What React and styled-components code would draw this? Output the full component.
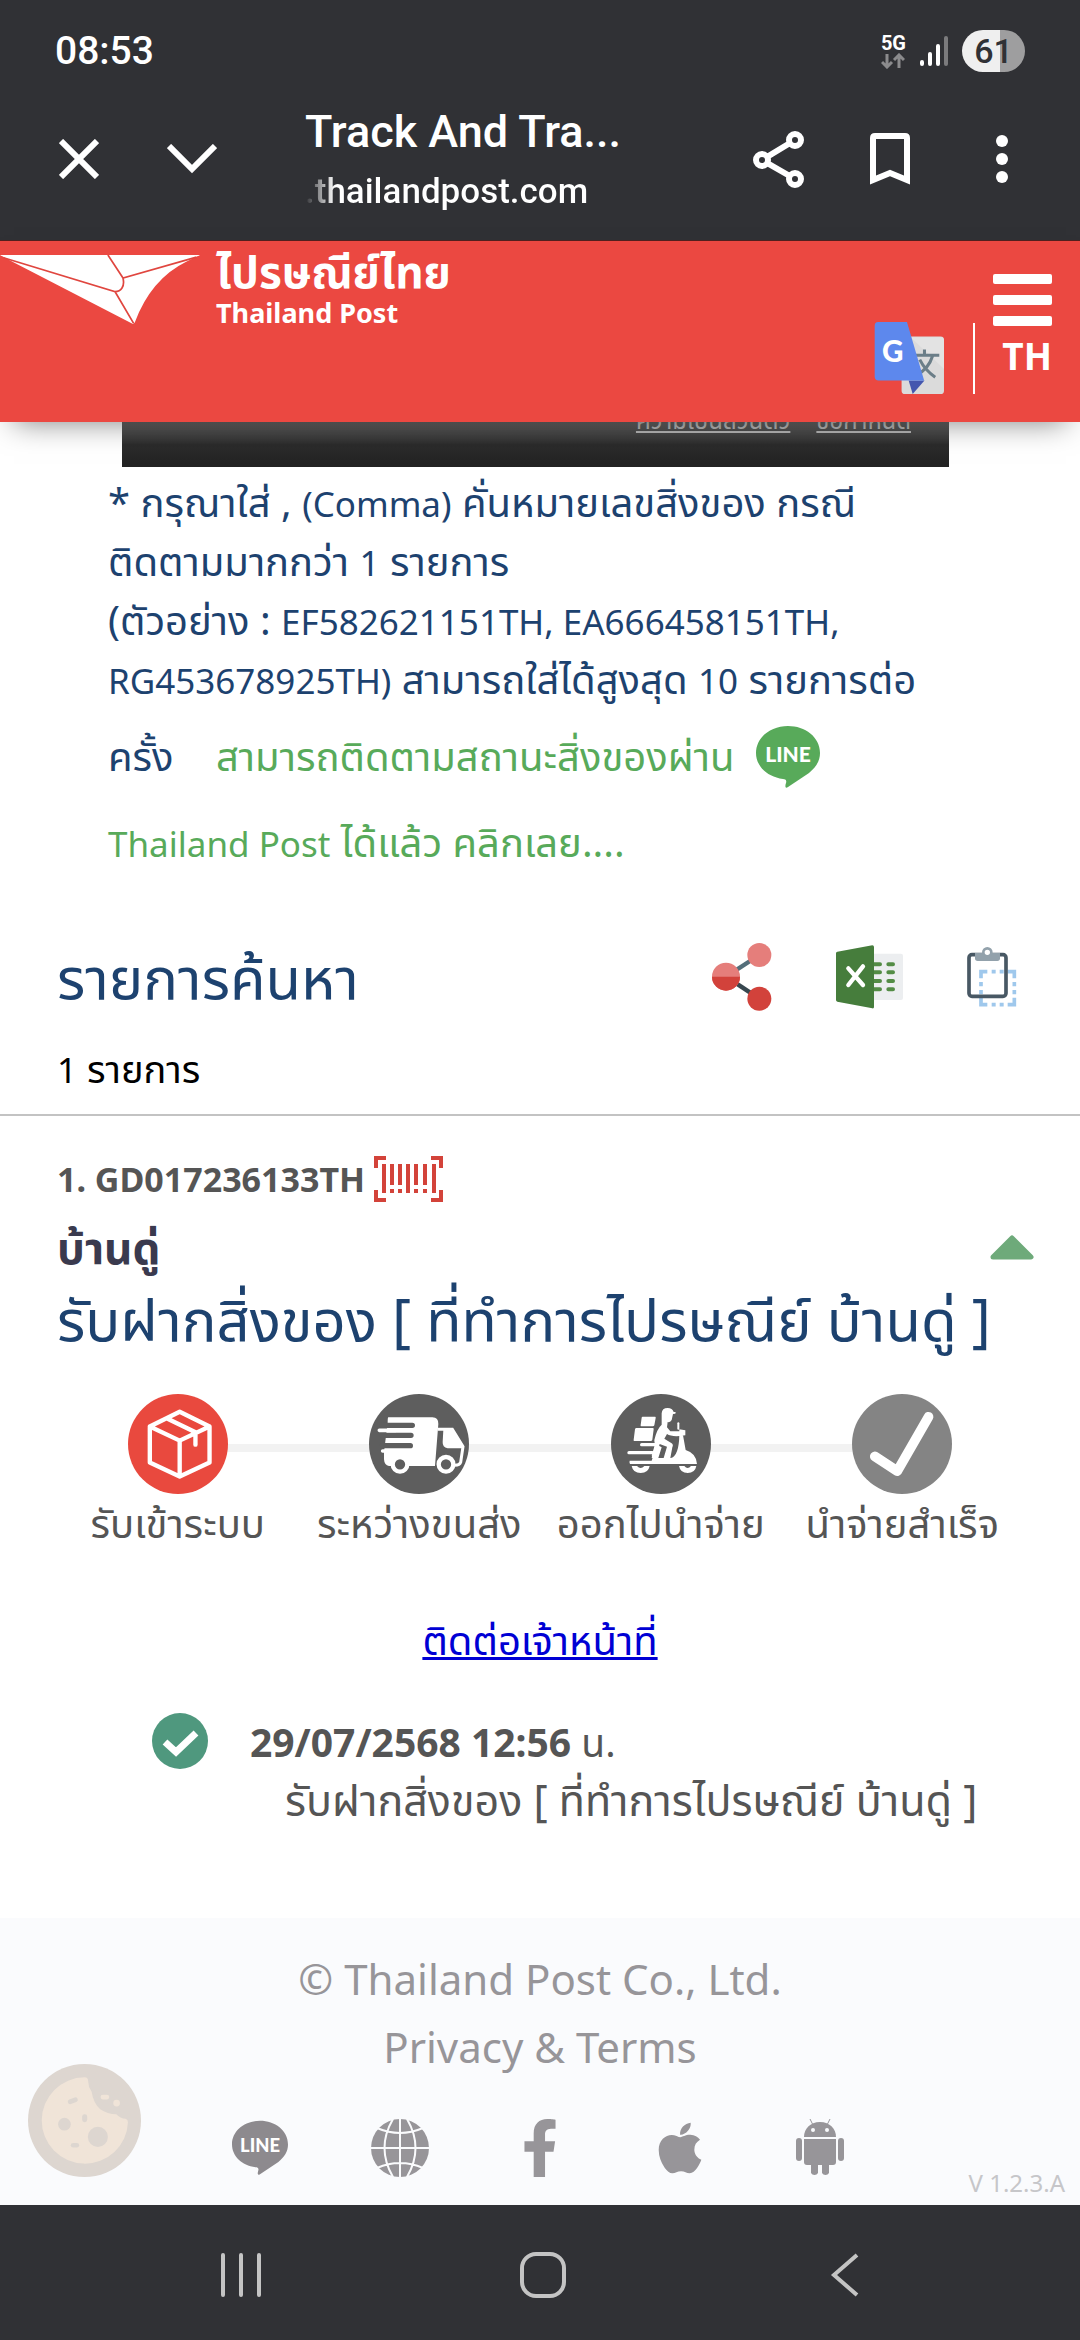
import * as React from 'react';
import styled, { createGlobalStyle } from 'styled-components';
import { FaApple, FaFacebookF } from 'react-icons/fa';

const GlobalStyle = createGlobalStyle`
  * {
    box-sizing: border-box;
  }

  body {
    margin: 0;
    background: #fff;
    font-family: "Noto Sans", "Noto Sans Thai", sans-serif;
  }

  button {
    display: flex;
    padding: 0;
    border: 0;
    background: none;
    color: inherit;
    font: inherit;
    cursor: pointer;
  }

  svg {
    display: block;
    flex: none;
  }

  h1, h2, h3, p, ol, ul {
    margin: 0;
    padding: 0;
    font-weight: 400;
    list-style: none;
  }
`;

const Screen = styled.div`
  position: relative;
  display: flex;
  flex-direction: column;
  min-height: 100vh;
  overflow: hidden;
`;

/* Phone and browser chrome */

const Chrome = styled.header`
  background: #303135;
  border-bottom: 1px solid #52211f;
  color: #fff;
  font-family: Roboto, sans-serif;
`;

const StatusBar = styled.div`
  display: flex;
  align-items: center;
  justify-content: space-between;
  height: 102px;
  padding: 0 55px;
  font-size: 39px;
  font-weight: 500;
`;

const StatusIcons = styled.div`
  display: flex;
  align-items: center;
  gap: 14px;
`;

const Network = styled.div`
  display: flex;
  flex-direction: column;
  align-items: center;
  font-size: 20px;
  font-weight: 700;
  line-height: 20px;
`;

const Battery = styled.div`
  width: 63px;
  border-radius: 22px;
  background: linear-gradient(90deg, #efefef 61%, #9e9e9f 61%);
  color: #303135;
  font-size: 34px;
  line-height: 42px;
  text-align: center;
`;

const Toolbar = styled.div`
  display: flex;
  align-items: center;
  height: 138px;
  padding: 0 52px 24px 59px;
`;

const ToolbarStart = styled.div`
  display: flex;
  align-items: center;
  gap: 68px;
  width: 246px;
`;

const PageInfo = styled.div`
  flex: 1;
  min-width: 0;
  padding-top: 6px;
  font-weight: 500;
  line-height: 60px;
  white-space: nowrap;
`;

const PageTitle = styled.p`
  font-size: 45px;
  font-weight: 500;
`;

const PageHost = styled.p`
  font-size: 35px;
  font-weight: 500;
  background: linear-gradient(90deg, #303135, #fff 30px);
  background-clip: text;
  color: transparent;
`;

const ToolbarEnd = styled.div`
  display: flex;
  align-items: center;
  gap: 66px;
`;

/* Site header */

const SiteHeader = styled.div`
  position: relative;
  z-index: 1;
  display: flex;
  justify-content: space-between;
  height: 181px;
  padding-right: 28px;
  background: #eb4841;
  box-shadow: 0 14px 28px -14px rgba(0, 0, 0, 0.5);
  color: #fff;
`;

const Brand = styled.a`
  display: flex;
  gap: 16px;
  padding-top: 6px;
  color: inherit;
  font-weight: 700;
  text-decoration: none;

  svg {
    margin-top: 8px;
  }
`;

const BrandThai = styled.div`
  font-size: 44px;
  line-height: 48px;
`;

const BrandLatin = styled.div`
  font-size: 27px;
  line-height: 36px;
`;

const HeaderTools = styled.div`
  display: flex;
  align-items: flex-end;
  gap: 28px;
  padding-bottom: 28px;
`;

const Divider = styled.div`
  width: 2px;
  height: 71px;
  margin-right: -10px;
  background: #fff;
`;

const MenuColumn = styled.div`
  display: flex;
  flex-direction: column;
  align-items: flex-end;
  height: 120px;
  font-size: 37px;
  font-weight: 700;
  line-height: 60px;
`;

/* Content */

const Main = styled.main`
  flex: 1;
`;

const Captcha = styled.div`
  display: flex;
  align-items: flex-end;
  justify-content: flex-end;
  gap: 26px;
  height: 45px;
  margin: 0 131px 0 122px;
  padding: 0 38px 32px 0;
  overflow: hidden;
  background: linear-gradient(#666, #2c2c2c 50%, #222);
`;

const CaptchaLink = styled.a`
  flex: none;
  color: #bbb;
  font-size: 24px;
  line-height: 30px;
`;

const Hint = styled.p`
  padding: 5px 108px 0;
  color: #1d426f;
  font-size: 40px;
  line-height: 59px;
  white-space: nowrap;
`;

/* Latin letters and digits run larger than Thai at the same size */
const Latin = styled.span`
  font-size: 35px;
  line-height: 1;
`;

const LineLink = styled.a`
  display: ${props => props.$block ? 'block' : 'inline-flex'};
  align-items: center;
  gap: 22px;
  margin-left: ${props => props.$block ? '0' : '32px'};
  color: #58aa5a;
  line-height: ${props => props.$block ? '76px' : '96px'};
  text-decoration: none;
`;

const ResultHead = styled.div`
  display: flex;
  align-items: center;
  justify-content: space-between;
  padding: 52px 63px 0 57px;
  color: #1d426f;
`;

const ResultTitle = styled.h1`
  font-size: 58px;
  line-height: 90px;
`;

const ExportTools = styled.div`
  display: flex;
  align-items: center;
  gap: 64px;
`;

const ResultCount = styled.p`
  padding: 16px 57px;
  border-bottom: 2px solid #c3c3c3;
  color: #000;
  font-size: 38px;
  line-height: 60px;
`;

const Item = styled.section`
  padding: 29px 57px 0;
  color: #555;
`;

const TrackNumber = styled.h2`
  display: flex;
  align-items: center;
  gap: 9px;
  font-size: 34px;
  font-weight: 700;
  line-height: 68px;
`;

const PlaceRow = styled.div`
  display: flex;
  align-items: center;
  justify-content: space-between;
  margin-right: -11px;
  color: #3a3a4e;
`;

const Place = styled.h3`
  font-size: 44px;
  font-weight: 700;
  line-height: 68px;
`;

const Status = styled.p`
  color: #1d426f;
  font-size: 58px;
  line-height: 76px;
  white-space: nowrap;
`;

const Steps = styled.ol`
  display: grid;
  grid-template-columns: repeat(4, 1fr);
  padding-top: 37px;
`;

const Step = styled.li`
  display: flex;
  flex-direction: column;
  align-items: center;
  font-size: 40px;
  line-height: 58px;
  white-space: nowrap;
`;

const StepTrack = styled.div`
  display: flex;
  justify-content: center;
  width: 100%;
  background: linear-gradient(#f2f2f2, #f2f2f2) no-repeat;
  background-position: ${props => props.$edge === 'start' ? '100%' : '0'} 50px;
  background-size: ${props => props.$edge ? '50%' : '100%'} 8px;
`;

const Contact = styled.p`
  padding: 54px 0 39px;
  font-size: 40px;
  line-height: 68px;
  text-align: center;

  a {
    color: #0000d4;
    text-decoration-thickness: 3px;
  }
`;

const History = styled.ul`
  padding: 0 0 87px 95px;
`;

const Event = styled.li`
  display: flex;
  gap: 42px;
  font-size: 39px;
  line-height: 58px;
  white-space: nowrap;
`;

const EventText = styled.p`
  padding-left: 35px;
  font-size: 43px;
`;

/* Footer and navigation */

const Footer = styled.footer`
  padding-top: 27px;
  background: #fafbfd;
  color: #979599;
  font-size: 42px;
  line-height: 68px;
  text-align: center;

  a {
    color: inherit;
    text-decoration: none;
  }
`;

const Socials = styled.div`
  display: grid;
  grid-template-columns: repeat(5, 140px);
  justify-content: center;
  justify-items: center;
  padding-top: 38px;
`;

const Version = styled.p`
  padding: 0 15px 6px 0;
  margin-top: -10px;
  color: #c6c6c9;
  font-size: 24px;
  line-height: 32px;
  text-align: right;
`;

const CookieButton = styled.button`
  position: absolute;
  bottom: 163px;
  left: 28px;
`;

const NavBar = styled.nav`
  display: flex;
  align-items: center;
  justify-content: space-around;
  height: 135px;
  padding: 4px 84px 0 90px;
  background: #303135;

  button {
    justify-content: center;
    width: 46px;
  }
`;

const StatusGlyphs = () => (
  <StatusIcons>
    <Network>
      5G
      <svg width="24" height="16" viewBox="0 0 24 16" fill="none" stroke="#8b8b8d" strokeWidth="3">
        <path d="M6 1v12M1 9l5 5 5-5M18 15V3M13 7l5-5 5 5" />
      </svg>
    </Network>
    <svg width="28" height="30" viewBox="0 0 28 30" strokeWidth="4" strokeLinecap="round">
      <path d="M2 26v2M10 18v10M18 10v18" stroke="#fff" />
      <path d="M26 2v26" stroke="#7b7b7d" />
    </svg>
    <Battery>61</Battery>
  </StatusIcons>
);

const Bird = () => (
  <svg width="200" height="69" viewBox="0 0 582 201">
    <path fill="#fff" d="M0 0H582L542 20Q440 70 392 197L387 201L36 20Z" />
    <path fill="#fff" d="M0 0L30 11H552L582 0Z" />
    <path
      fill="none"
      stroke="#e0463f"
      strokeWidth="5"
      d="M10 8L335 107L389 199M572 6L358 67L314 0M358 67C364 92 352 107 335 107"
    />
  </svg>
);

const TranslateIcon = () => (
  <svg width="71" height="72" viewBox="0 0 207 214">
    <rect x="80" y="43" width="126" height="171" rx="10" fill="#dbdbdb" />
    <path d="M107 45H196Q206 45 206 55V140Z" fill="#e3e3e3" />
    <g fill="none" stroke="#6b7e88" strokeWidth="9">
      <path d="M120 99H192M148 82V99M172 101Q160 140 126 156M134 112Q150 144 180 164" />
    </g>
    <path d="M101 174H148L113 214Z" fill="#4456ae" />
    <path d="M10 0H96L147 174H12Q0 174 0 162V12Q0 0 10 0Z" fill="#5d88ed" />
    <text x="22" y="119" fontSize="88" fontWeight="900" fill="#fff" fontFamily="Lato, sans-serif">G</text>
  </svg>
);

const LineIcon = ({ size, color }) => (
  <svg width={size} height={size} viewBox="0 0 64 64">
    <path fill={color} d="M32 2C49 2 64 13 64 29C64 37 60 43 53 49L32 63C29 65 29 62 30 59C31 56 29 55 27 55C11 53 0 42 0 29C0 13 15 2 32 2Z" />
    <text
      x="32"
      y="38"
      fontSize="21"
      fontWeight="900"
      textAnchor="middle"
      fill="#fff"
      fontFamily="Lato, sans-serif"
    >
      LINE
    </text>
  </svg>
);

const ShareColorIcon = () => (
  <svg width="60" height="68" viewBox="0 0 180 204">
    <path d="M42 101L142 36" stroke="#546e7a" strokeWidth="13" />
    <path d="M42 101L142 167" stroke="#37474f" strokeWidth="13" />
    <circle cx="142" cy="36" r="36" fill="#e57e7b" />
    <circle cx="142" cy="167" r="36" fill="#d2423b" />
    <circle cx="42" cy="101" r="42" fill="#e57e7b" />
    <path d="M0 101a42 42 0 0 0 84 0Z" fill="#d2423b" />
  </svg>
);

const ExcelIcon = () => (
  <svg width="67" height="64" viewBox="0 0 201 190">
    <rect x="100" y="25" width="101" height="139" rx="6" fill="#eceef0" />
    <path
      d="M112 57H132M157 57H171M112 81H132M157 81H171M112 107H132M157 107H171M112 132H132M157 132H171"
      stroke="#538c45"
      strokeWidth="12"
      strokeLinecap="round"
    />
    <path d="M4 19L109 0Q114 0 114 5V185Q114 190 109 189L4 169Q0 168 0 164V24Q0 20 4 19Z" fill="#467d3c" />
    <path d="M37 69L81 119M81 63L37 119" stroke="#fff" strokeWidth="13" strokeLinecap="round" />
  </svg>
);

const ClipboardIcon = () => (
  <svg width="50" height="60" viewBox="0 0 150 180" fill="none">
    <path
      d="M61 74H42V94M42 105V118M42 129V142M42 152V173H61M74 173H86M98 173H110M122 173H142V152M142 142V129M142 118V105M142 94V74H122M110 74H98M86 74H74"
      stroke="#9fc8ec"
      strokeWidth="11"
    />
    <rect x="6" y="23" width="111" height="125" rx="9" stroke="#485864" strokeWidth="11" />
    <path d="M24 18H99V34Q99 42 91 42H32Q24 42 24 34Z" fill="#92a1ab" />
    <circle cx="61" cy="16" r="12" fill="#fff" stroke="#92a1ab" strokeWidth="8" />
  </svg>
);

const BarcodeIcon = () => (
  <svg width="69" height="46" viewBox="0 0 69 46" fill="none" stroke="#d3433a" strokeWidth="4">
    <path d="M12 2H2V12M57 2H67V12M2 34V44H12M67 34V44H57" />
    <path d="M10 8V37M34 8V37M60 8V37M18 8V29M26 8V29M42 8V29M51 8V29M18 33V37M26 33V37M42 33V37M51 33V37" />
  </svg>
);

const BoxIcon = () => (
  <svg width="100" height="100" viewBox="0 0 298 298">
    <circle cx="149" cy="149" r="149" fill="#e9493e" />
    <path
      d="M154 53L243 97V204L154 246L65 204V97ZM65 97L154 139L243 97M154 139V246M118 74L201 114V151"
      fill="none"
      stroke="#fff"
      strokeWidth="13"
      strokeLinejoin="round"
      strokeLinecap="round"
    />
  </svg>
);

const TruckIcon = () => (
  <svg width="100" height="100" viewBox="0 0 300 300">
    <circle cx="150" cy="150" r="150" fill="#5e5e5e" />
    <path d="M58 70H190Q209 71 208 90L198 216H60Q46 214 45 196V174L56 86Q56 70 58 70Z" fill="#fff" />
    <path d="M40 94H130M40 124H126M40 155H124" stroke="#5e5e5e" strokeWidth="16" strokeLinecap="round" />
    <path d="M31 109H80M57 140H80M41 171H80" stroke="#fff" strokeWidth="11" strokeLinecap="round" />
    <path d="M206 106H250L282 158L275 205Q272 214 258 214" fill="none" stroke="#fff" strokeWidth="9" />
    <path d="M223 108H250L284 163H236Q220 160 221 144Z" fill="#fff" />
    <g fill="#5e5e5e" stroke="#fff" strokeWidth="13">
      <circle cx="93" cy="211" r="22" />
      <circle cx="231" cy="211" r="22" />
    </g>
  </svg>
);

const ScooterIcon = () => (
  <svg width="100" height="100" viewBox="0 0 300 300">
    <circle cx="150" cy="150" r="150" fill="#5e5e5e" />
    <g fill="#fff">
      <path d="M95 68H132Q135 68 134 72L130 94Q129 97 125 97H91Q88 97 89 93L92 71Q92 68 95 68Z" />
      <path d="M76 102H125Q129 102 128 106L124 137Q123 141 119 141H70Q67 141 68 137L72 106Q73 102 76 102Z" />
      <path d="M152 58Q153 42 170 42Q184 42 188 54L194 54L193 59L186 60L182 78Q178 86 170 84L168 100L178 112L205 112V106L223 109V124L206 126Q180 128 168 120L160 134L182 148Q188 152 184 160L178 192H158L168 158L146 150L138 178Q134 188 128 192H120L132 150Q130 146 130 138Q138 104 152 92Z" />
      <path d="M205 122L216 124L224 168Q256 178 258 210H60Q54 210 56 200H122L138 152L152 160L142 192H180Q204 184 205 122Z" />
      <path d="M62 216H116Q112 237 89 237Q66 237 62 216ZM204 216H256Q252 237 230 237Q208 237 204 216Z" />
    </g>
    <path d="M78 216Q89 228 100 216M220 216Q230 228 240 216" fill="#5e5e5e" />
    <path d="M92 152H134M54 176H124" stroke="#fff" strokeWidth="10" strokeLinecap="round" />
    <path d="M60 188H118M92 164H122" stroke="#5e5e5e" strokeWidth="10" strokeLinecap="round" />
    <path d="M202 88V104" stroke="#fff" strokeWidth="6" strokeLinecap="round" />
  </svg>
);

const DoneIcon = () => (
  <svg width="100" height="100" viewBox="0 0 298 298" fill="none">
    <circle cx="149" cy="149" r="149" fill="#848484" />
    <path d="M68 186L135 230L228 68" stroke="#fff" strokeWidth="29" strokeLinecap="round" strokeLinejoin="round" />
  </svg>
);

const CheckBadge = () => (
  <svg width="56" height="56" viewBox="0 0 56 56" fill="none">
    <circle cx="28" cy="28" r="28" fill="#4f987e" />
    <path d="M13 29L24 39L44 20" stroke="#fff" strokeWidth="7" />
  </svg>
);

const GlobeIcon = () => (
  <svg width="58" height="58" viewBox="0 0 58 58">
    <circle cx="29" cy="29" r="29" fill="#979599" />
    <path
      d="M29 0V58M0 29H58M22 0Q5 29 22 58M36 0Q53 29 36 58M6 9Q29 19 52 9M6 49Q29 39 52 49"
      fill="none"
      stroke="#fafbfd"
      strokeWidth="2"
    />
  </svg>
);

const AndroidIcon = () => (
  <svg width="48" height="58" viewBox="0 0 48 58" fill="#979599">
    <path d="M8 18C8 10 14 3 24 3S40 10 40 18Z" />
    <path d="M8 20H40V43Q40 46 37 46H33V54A4 4 0 0 1 26 54V46H22V54A4 4 0 0 1 15 54V46H11Q8 46 8 43Z" />
    <rect y="19" width="6" height="23" rx="3" />
    <rect x="42" y="19" width="6" height="23" rx="3" />
    <path d="M14 0L17 6M34 0L31 6" stroke="#979599" />
    <circle cx="17" cy="11" r="2" fill="#fafbfd" />
    <circle cx="31" cy="11" r="2" fill="#fafbfd" />
  </svg>
);

const CookieIcon = () => (
  <svg width="113" height="113" viewBox="0 0 338 338">
    <circle cx="169" cy="169" r="169" fill="#ddd6d0" />
    <path d="M169 40Q180 40 180 52Q180 68 190 82Q196 118 216 135Q238 150 264 150Q276 162 292 164Q299 166 299 174A129 129 0 1 1 169 40Z" fill="#f0e4d8" />
    <g fill="#ddd6d0">
      <circle cx="109" cy="180" r="19" />
      <circle cx="209" cy="218" r="30" />
      <rect x="162" y="150" width="15" height="24" rx="7" />
      <rect x="128" y="236" width="25" height="14" rx="7" />
      <path d="M126 113L142 107" stroke="#ddd6d0" strokeWidth="14" strokeLinecap="round" />
    </g>
    <rect x="217" y="92" width="26" height="14" rx="7" fill="#f0e4d8" />
    <circle cx="265" cy="117" r="10" fill="#f0e4d8" />
  </svg>
);

const STEPS = [
  { label: 'รับเข้าระบบ', icon: BoxIcon, edge: 'start' },
  { label: 'ระหว่างขนส่ง', icon: TruckIcon },
  { label: 'ออกไปนำจ่าย', icon: ScooterIcon },
  { label: 'นำจ่ายสำเร็จ', icon: DoneIcon, edge: 'end' }
];

const BrowserChrome = () => (
  <Chrome>
    <StatusBar>
      <span>08:53</span>
      <StatusGlyphs />
    </StatusBar>
    <Toolbar>
      <ToolbarStart>
        <button aria-label="Close">
          <svg width="40" height="40" viewBox="0 0 40 40" stroke="#fff" strokeWidth="6">
            <path d="M2 2L38 38M38 2L2 38" />
          </svg>
        </button>
        <button aria-label="Minimise">
          <svg width="50" height="30" viewBox="0 0 50 30" fill="none" stroke="#fff" strokeWidth="6">
            <path d="M2 2L25 25L48 2" />
          </svg>
        </button>
      </ToolbarStart>
      <PageInfo>
        <PageTitle>Track And Tra...</PageTitle>
        <PageHost>.thailandpost.com</PageHost>
      </PageInfo>
      <ToolbarEnd>
        <button aria-label="Share">
          <svg width="51" height="57" viewBox="0 0 51 57" fill="none" stroke="#fff" strokeWidth="6">
            <path d="M9 29L42 9M9 29L42 48" />
            <g fill="#303135">
              <circle cx="9" cy="29" r="6" />
              <circle cx="42" cy="9" r="6" />
              <circle cx="42" cy="48" r="6" />
            </g>
          </svg>
        </button>
        <button aria-label="Bookmark">
          <svg width="40" height="52" viewBox="0 0 40 52" fill="none" stroke="#fff" strokeWidth="6">
            <path d="M3 47V5Q3 3 5 3H35Q37 3 37 5V47L20 40Z" />
          </svg>
        </button>
        <button aria-label="More">
          <svg width="52" height="48" viewBox="0 0 52 48" fill="#fff">
            <circle cx="26" cy="6" r="6" />
            <circle cx="26" cy="24" r="6" />
            <circle cx="26" cy="42" r="6" />
          </svg>
        </button>
      </ToolbarEnd>
    </Toolbar>
  </Chrome>
);

const Header = () => (
  <SiteHeader>
    <Brand href="#">
      <Bird />
      <div>
        <BrandThai>ไปรษณีย์ไทย</BrandThai>
        <BrandLatin>Thailand Post</BrandLatin>
      </div>
    </Brand>
    <HeaderTools>
      <button aria-label="Translate"><TranslateIcon /></button>
      <Divider />
      <MenuColumn>
        <button aria-label="Menu">
          <svg width="59" height="52" viewBox="0 0 59 52" fill="#fff">
            <rect width="59" height="10" rx="2" />
            <rect y="21" width="59" height="10" rx="2" />
            <rect y="42" width="59" height="10" rx="2" />
          </svg>
        </button>
        <button>TH</button>
      </MenuColumn>
    </HeaderTools>
  </SiteHeader>
);

export default function App() {
  return (
    <Screen>
      <GlobalStyle />
      <BrowserChrome />
      <Header />
      <Main>
        <Captcha>
          <CaptchaLink href="#">ความเป็นส่วนตัว</CaptchaLink>
          <CaptchaLink href="#">ข้อกำหนด</CaptchaLink>
        </Captcha>
        <Hint>
          * กรุณาใส่ , <Latin>(Comma)</Latin> คั่นหมายเลขสิ่งของ กรณี<br />
          ติดตามมากกว่า <Latin>1</Latin> รายการ<br />
          (ตัวอย่าง : <Latin>EF582621151TH, EA666458151TH,</Latin><br />
          <Latin>RG453678925TH)</Latin> สามารถใส่ได้สูงสุด <Latin>10</Latin> รายการต่อ<br />
          ครั้ง{' '}
          <LineLink href="#">
            สามารถติดตามสถานะสิ่งของผ่าน
            <LineIcon size={64} color="#58aa5a" />
          </LineLink>
          <LineLink href="#" $block><Latin>Thailand Post</Latin> ได้แล้ว คลิกเลย....</LineLink>
        </Hint>

        <ResultHead>
          <ResultTitle>รายการค้นหา</ResultTitle>
          <ExportTools>
            <button aria-label="Share results"><ShareColorIcon /></button>
            <button aria-label="Export to Excel"><ExcelIcon /></button>
            <button aria-label="Copy"><ClipboardIcon /></button>
          </ExportTools>
        </ResultHead>
        <ResultCount><Latin>1</Latin> รายการ</ResultCount>

        <Item>
          <TrackNumber>
            1. GD017236133TH
            <BarcodeIcon />
          </TrackNumber>
          <PlaceRow>
            <Place>บ้านดู่</Place>
            <button aria-label="Collapse">
              <svg width="44" height="25" viewBox="0 0 44 25">
                <path d="M22 3L41 22H3Z" fill="#6eaa7a" stroke="#6eaa7a" strokeWidth="5" strokeLinejoin="round" />
              </svg>
            </button>
          </PlaceRow>
          <Status>รับฝากสิ่งของ [ ที่ทำการไปรษณีย์ บ้านดู่ ]</Status>
          <Steps>
            {STEPS.map(({ label, icon: Icon, edge }) => (
              <Step key={label}>
                <StepTrack $edge={edge}><Icon /></StepTrack>
                {label}
              </Step>
            ))}
          </Steps>
          <Contact><a href="#">ติดต่อเจ้าหน้าที่</a></Contact>
          <History>
            <Event>
              <CheckBadge />
              <div>
                <p><strong>29/07/2568 12:56</strong> น.</p>
                <EventText>รับฝากสิ่งของ [ ที่ทำการไปรษณีย์ บ้านดู่ ]</EventText>
              </div>
            </Event>
          </History>
        </Item>
      </Main>

      <Footer>
        <p>© Thailand Post Co., Ltd.</p>
        <p><a href="#">Privacy &amp; Terms</a></p>
        <Socials>
          <a href="#" aria-label="LINE"><LineIcon size={56} color="#8d8a8e" /></a>
          <a href="#" aria-label="Website"><GlobeIcon /></a>
          <a href="#" aria-label="Facebook"><FaFacebookF size={58} /></a>
          <a href="#" aria-label="App Store"><FaApple size={58} /></a>
          <a href="#" aria-label="Google Play"><AndroidIcon /></a>
        </Socials>
        <Version>V 1.2.3.A</Version>
      </Footer>

      <NavBar>
        <button aria-label="Recent apps">
          <svg width="42" height="44" viewBox="0 0 42 44" stroke="#c4c4c4" strokeWidth="4" strokeLinecap="round">
            <path d="M3 2V42M21 2V42M39 2V42" />
          </svg>
        </button>
        <button aria-label="Home">
          <svg width="46" height="46" viewBox="0 0 46 46" fill="none" stroke="#c4c4c4" strokeWidth="4">
            <rect x="2" y="2" width="42" height="42" rx="14" />
          </svg>
        </button>
        <button aria-label="Back">
          <svg width="30" height="44" viewBox="0 0 30 44" fill="none" stroke="#c4c4c4" strokeWidth="4">
            <path d="M27 2L4 22L27 42" />
          </svg>
        </button>
      </NavBar>
      <CookieButton aria-label="Cookie settings"><CookieIcon /></CookieButton>
    </Screen>
  );
}
